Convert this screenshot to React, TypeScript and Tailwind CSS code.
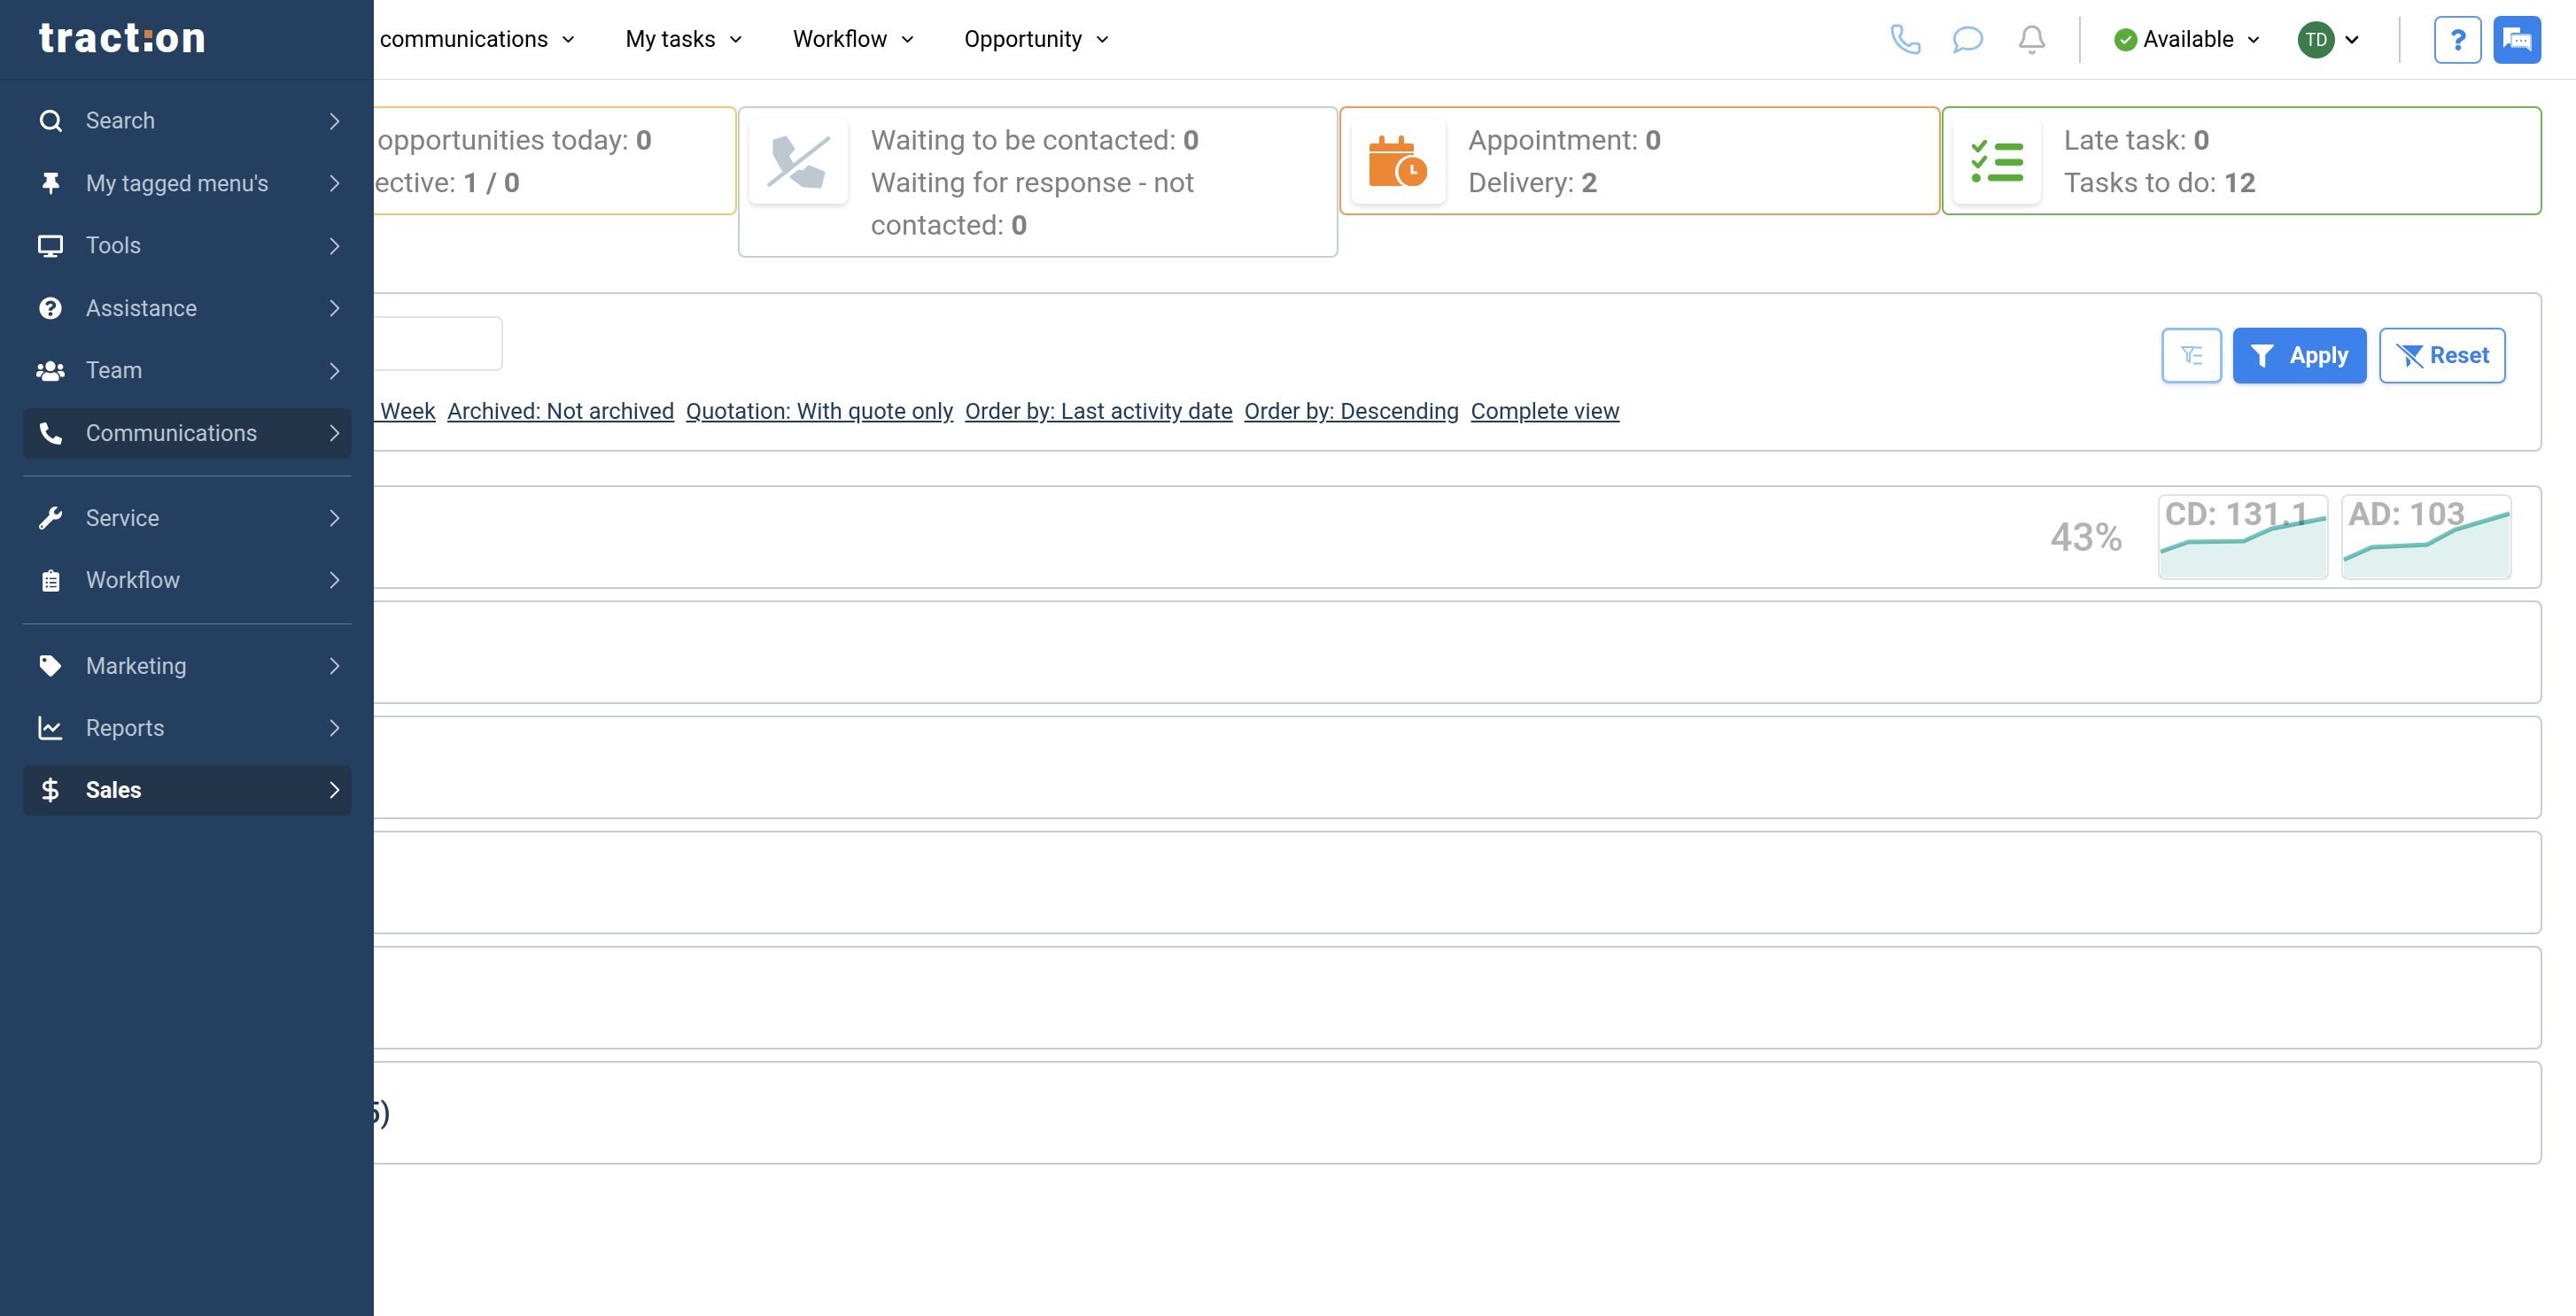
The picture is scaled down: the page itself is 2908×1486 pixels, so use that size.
import { Bell, ChartLine, ChevronDown, ChevronRight, DollarSign, Phone, Search } from "lucide-react"
import { FaClipboardList, FaDesktop, FaFilter, FaPhoneAlt, FaQuestion, FaQuestionCircle, FaTag, FaThumbtack, FaUsers, FaWrench } from "react-icons/fa"
import type { ReactNode } from "react"

const menuTop = [
  { label: "Search", icon: <Search size={29} strokeWidth={2.6} /> },
  { label: "My tagged menu's", icon: <FaThumbtack size={25} /> },
  { label: "Tools", icon: <FaDesktop size={28} /> },
  { label: "Assistance", icon: <FaQuestionCircle size={26} /> },
  { label: "Team", icon: <FaUsers size={32} /> },
  { label: "Communications", icon: <FaPhoneAlt size={25} />, hover: true },
]
const menuMiddle = [
  { label: "Service", icon: <FaWrench size={26} /> },
  { label: "Workflow", icon: <FaClipboardList size={25} /> },
]
const menuBottom = [
  { label: "Marketing", icon: <FaTag size={24} /> },
  { label: "Reports", icon: <ChartLine size={32} strokeWidth={2.2} /> },
  { label: "Sales", icon: <DollarSign size={30} strokeWidth={2.6} />, active: true },
]
const navItems = ["My communications", "My tasks", "Workflow", "Opportunity"]
const filters = ["Period: Week", "Archived: Not archived", "Quotation: With quote only", "Order by: Last activity date", "Order by: Descending", "Complete view"]

function MenuItem({ label, icon, hover, active }: { label: string; icon: ReactNode; hover?: boolean; active?: boolean }) {
  return (
    <div className={`flex h-[57px] items-center rounded-lg pl-[14px] pr-[2px] ${hover || active ? "bg-[#23354a]" : ""}`}>
      <span className="flex w-[34px] justify-center text-white">{icon}</span>
      <span className={`ml-[23px] flex-1 text-[25.5px] ${active ? "font-bold text-white" : "text-[#b9c5d1]"}`}>{label}</span>
      <ChevronRight size={34} strokeWidth={1.3} className={active ? "text-white" : "text-[#b9c5d1]"} />
    </div>
  )
}

function Sidebar() {
  return (
    <aside className="absolute inset-y-0 left-0 z-10 w-[422px] bg-[#243f60]">
      <div className="flex h-[90px] items-center border-b border-[#1f3652] pb-[4px] pl-[44px] text-[48px] font-black tracking-[3px] text-white">
        <span>tract</span>
        <span className="mx-[3px] mt-[6px] flex flex-col gap-[5px]">
          <span className="h-[9px] w-[9px] bg-[#cf823f]" />
          <span className="h-[10px] w-[9px] bg-white" />
        </span>
        <span>on</span>
      </div>
      <nav className="flex flex-col pl-[26px] pr-[25px] pt-[18px]">
        <div className="flex flex-col gap-[13.5px]">
          {menuTop.map((m) => <MenuItem key={m.label} {...m} />)}
        </div>
        <div className="my-[19px] h-px bg-[#667d97]" />
        <div className="flex flex-col gap-[13px]">
          {menuMiddle.map((m) => <MenuItem key={m.label} {...m} />)}
        </div>
        <div className="mb-[19px] mt-[20px] h-px bg-[#667d97]" />
        <div className="flex flex-col gap-[13px]">
          {menuBottom.map((m) => <MenuItem key={m.label} {...m} />)}
        </div>
      </nav>
    </aside>
  )
}

function Header() {
  return (
    <header className="flex h-[90px] items-center justify-between border-b border-[#d9d9d9] pl-[388px] pr-[39px]">
      <div className="flex items-center gap-[54px] text-[25.5px] text-black">
        {navItems.map((item) => (
          <div key={item} className="flex items-center gap-[12px]">
            <span>{item}</span>
            <ChevronDown size={21} strokeWidth={2.4} />
          </div>
        ))}
      </div>
      <div className="flex items-center">
        <Phone size={37} strokeWidth={1.9} className="text-[#8fc1f5]" />
        <svg viewBox="0 0 36 32" className="ml-[34px] h-[32px] w-[36px]" fill="none" stroke="#8fc1f5" strokeWidth="2.8" strokeLinejoin="round">
          <path d="M18 2c8.800 0 15.500 5.300 15.500 12.300S26.800 26.500 18 26.500c-2.300 0-4.400-.4-6.300-1L2.500 30l3-7C3.500 20.800 2.500 17.700 2.500 14.300 2.500 7.300 9.200 2 18 2z" />
        </svg>
        <Bell size={36} strokeWidth={2} className="ml-[36px] text-[#b3b3b3]" />
        <div className="ml-[35px] h-[52px] w-[2px] bg-[#c8c8c8]" />
        <span className="ml-[38px] flex h-[26px] w-[26px] items-center justify-center rounded-full bg-[#59ac38]">
          <svg viewBox="0 0 16 16" className="h-[16px] w-[16px]" fill="none" stroke="white" strokeWidth="2.4" strokeLinecap="round" strokeLinejoin="round">
            <path d="M3 8.500l3.200 3L13 4.800" />
          </svg>
        </span>
        <span className="ml-[7px] text-[25.5px] text-black">Available</span>
        <ChevronDown size={20} strokeWidth={2.4} className="ml-[12px]" />
        <span className="ml-[40px] flex h-[42px] w-[42px] items-center justify-center rounded-full bg-[#3b7d4a] text-[20px] text-white">TD</span>
        <ChevronDown size={24} strokeWidth={2.6} className="ml-[7px]" />
        <div className="ml-[41px] h-[52px] w-[2px] bg-[#c8c8c8]" />
        <button className="ml-[38px] flex h-[54px] w-[54px] items-center justify-center rounded-lg border-2 border-[#5c97ee] bg-white text-[#3d82ea]">
          <FaQuestion size={24} />
        </button>
        <button className="ml-[13px] flex h-[54px] w-[54px] items-center justify-center rounded-lg bg-[#3d82ea]">
          <svg viewBox="0 0 32 30" className="h-[30px] w-[32px]">
            <path d="M0 1h19v6h-8a3 3 0 0 0-3 3v9H5l-5 5z" fill="white" />
            <path d="M11 9h18a2 2 0 0 1 2 2v16l-5-4H11a2 2 0 0 1-2-2V11a2 2 0 0 1 2-2z" fill="#3d82ea" stroke="white" strokeWidth="1.2" />
            <path d="M11 10h18a1 1 0 0 1 1 1v14l-4-3H11a1 1 0 0 1-1-1V11a1 1 0 0 1 1-1z" fill="white" />
            <circle cx="15" cy="16" r="1" fill="#3d82ea" />
            <circle cx="20" cy="16" r="1" fill="#3d82ea" />
            <circle cx="25" cy="16" r="1" fill="#3d82ea" />
          </svg>
        </button>
      </div>
    </header>
  )
}

function PhoneSlashIcon() {
  return (
    <svg viewBox="0 0 72 64" className="h-[64px] w-[72px]" fill="#bcc8d2" stroke="#bcc8d2" strokeWidth="3" strokeLinejoin="round">
      <path d="M8 9l13-4 9 13-7 8 5 8-10 8-10-18z" />
      <path d="M27 50l9-7 5 1 6-6 17 7-4 16-19-1z" />
      <path d="M2.500 58.500L69 6.500" fill="none" strokeWidth="4.500" strokeLinecap="round" />
    </svg>
  )
}

function CalendarClockIcon() {
  return (
    <svg viewBox="0 0 65 57" className="h-[57px] w-[65px]" fill="#ee8733">
      <rect x="11" y="0" width="6" height="12" rx="3" />
      <rect x="33" y="0" width="6" height="12" rx="3" />
      <path d="M0 18v-6a3 3 0 0 1 3-3h44a3 3 0 0 1 3 3v6z" />
      <path d="M0 20h50v37H3a3 3 0 0 1-3-3z" />
      <circle cx="48" cy="41" r="19" fill="white" />
      <circle cx="49" cy="41" r="16.500" />
      <path d="M48 33v9h6" fill="none" stroke="white" strokeWidth="3" />
    </svg>
  )
}

function TasksIcon() {
  return (
    <svg viewBox="0 0 58 48" className="h-[48px] w-[58px]" fill="#59ac38">
      <path d="M2 7l5 5 8-10M2 25l5 5 8-10" fill="none" stroke="#59ac38" strokeWidth="4.500" strokeLinecap="round" strokeLinejoin="round" />
      <rect x="26" y="4" width="32" height="7.500" rx="3.700" />
      <rect x="26" y="21.500" width="32" height="7.500" rx="3.700" />
      <rect x="18" y="39" width="40" height="7.500" rx="3.700" />
      <circle cx="5" cy="43" r="5" />
    </svg>
  )
}

function StatCard({ border, icon, boxWidth, children }: { border: string; icon: ReactNode; boxWidth: string; children: ReactNode }) {
  return (
    <div className={`flex items-start gap-[26px] rounded-lg border-2 p-[11.5px] ${border}`}>
      <div className={`flex h-[96px] shrink-0 items-center justify-center rounded-lg bg-white shadow-[0_3px_6px_rgba(0,0,0,0.14)] ${boxWidth}`}>{icon}</div>
      <div className="text-[32px] leading-[48px] text-[#808080]">{children}</div>
    </div>
  )
}

function Sparkline({ label, ys }: { label: string; ys: number[] }) {
  const xs = [3, 34.5, 97, 128.5, 190]
  const line = ys.map((y, i) => `${i === 0 ? "M" : "L"}${xs[i]} ${y}`).join(" ")
  return (
    <div className="relative h-[97px] w-[193px] rounded-lg border-2 border-[#e2e2e2] bg-white pl-[6px] text-[37px] font-bold leading-[42px] text-[#b3b3b3]">
      {label}
      <svg viewBox="0 0 193 97" className="absolute -left-[2px] -top-[2px] h-[97px] w-[193px]">
        <path d={`${line} V94 H3 Z`} fill="#e1f1f0" className="mix-blend-multiply" />
        <path d={line} fill="none" stroke="#72c4bf" strokeWidth="5" className="mix-blend-multiply" />
      </svg>
    </div>
  )
}

function Row({ children }: { children?: ReactNode }) {
  return <div className="flex h-[117px] items-center rounded-lg border-2 border-[#c3ced9]">{children}</div>
}

export default function App() {
  return (
    <div className="relative min-h-screen bg-white font-[Roboto,sans-serif]">
      <Sidebar />
      <Header />
      <main className="flex flex-col pl-[153px] pr-[38px] pt-[30px]">
        <div className="grid grid-cols-4 items-start gap-px">
          <div className="rounded-lg border-2 border-[#f2c964] py-[11.5px] pl-[220px] text-[32px] leading-[48px] text-[#808080]">
            My opportunities today: <b>0</b>
            <br />
            Objective: <b>1 / 0</b>
          </div>
          <StatCard border="border-[#c3ced9]" icon={<PhoneSlashIcon />} boxWidth="w-[111px]">
            Waiting to be contacted: <b>0</b>
            <br />
            Waiting for response - not
            <br />
            contacted: <b>0</b>
          </StatCard>
          <StatCard border="border-[#f19a55]" icon={<CalendarClockIcon />} boxWidth="w-[106px]">
            Appointment: <b>0</b>
            <br />
            Delivery: <b>2</b>
          </StatCard>
          <StatCard border="border-[#6eb651]" icon={<TasksIcon />} boxWidth="w-[99px]">
            Late task: <b>0</b>
            <br />
            Tasks to do: <b>12</b>
          </StatCard>
        </div>

        <section className="mt-[39px] flex h-[180px] items-start justify-between rounded-lg border-2 border-[#c3ced9] pr-[39px]">
          <div className="flex flex-col pt-[25px]">
            <div className="ml-[30px] h-[62px] w-[383px] rounded-lg border-2 border-[#e2e2e2]" />
            <div className="mt-[27px] flex gap-[13px] pl-[188px] text-[25.7px] leading-[36px] text-[#1f3b5e]">
              {filters.map((f) => (
                <a key={f} className="underline">{f}</a>
              ))}
            </div>
          </div>
          <div className="mt-[38px] flex items-center">
            <button className="flex h-[63px] w-[69px] items-center justify-center rounded-lg border-[3px] border-[#8fc1f5] bg-white shadow-[0_2px_4px_rgba(0,0,0,0.12)]">
              <svg viewBox="0 0 26 22" className="h-[22px] w-[26px]" fill="none" stroke="#8fc1f5" strokeWidth="1.800" strokeLinejoin="round">
                <path d="M1 1h14l-5 7v10l-3-2V8z" />
                <path d="M16 1.500h8M14 10.500h10M14 19.500h10" />
              </svg>
            </button>
            <button className="ml-[12px] flex h-[63px] w-[151px] items-center justify-center gap-[18px] rounded-lg bg-[#3d82ea] text-[26px] font-bold text-white shadow-[0_2px_4px_rgba(0,0,0,0.2)]">
              <FaFilter size={26} />
              Apply
            </button>
            <button className="ml-[14px] flex h-[63px] w-[143px] items-center justify-center gap-[7px] rounded-lg border-2 border-[#5c97ee] bg-white text-[26px] font-bold text-[#3d82ea] shadow-[0_2px_4px_rgba(0,0,0,0.12)]">
              <svg viewBox="0 0 32 28" className="h-[28px] w-[32px]" fill="#3d82ea">
                <path d="M5 2h26l-9 12v7l-4-3z" />
                <path d="M11 14l5 5v4l-4 4z" />
                <path d="M1 1l29 26" fill="none" stroke="#3d82ea" strokeWidth="2" strokeLinecap="round" />
                <path d="M4 1l26 23" fill="none" stroke="white" strokeWidth="1.600" />
              </svg>
              Reset
            </button>
          </div>
        </section>

        <div className="mt-[38px] flex flex-col gap-[13px]">
          <Row>
            <div className="ml-auto flex items-center pr-[32px]">
              <span className="text-[44px] font-medium text-[#b3b3b3]">43%</span>
              <div className="ml-[39px] flex gap-[14px]">
                <Sparkline label="CD: 131.1" ys={[65, 54, 53, 39, 27]} />
                <Sparkline label="AD: 103" ys={[74, 60, 57, 40, 22]} />
              </div>
            </div>
          </Row>
          <Row />
          <Row />
          <Row />
          <Row />
          <Row>
            <span className="w-[286px] text-right text-[33px] font-medium text-[#1f3b5e]">Closed (5)</span>
          </Row>
        </div>
      </main>
    </div>
  )
}
